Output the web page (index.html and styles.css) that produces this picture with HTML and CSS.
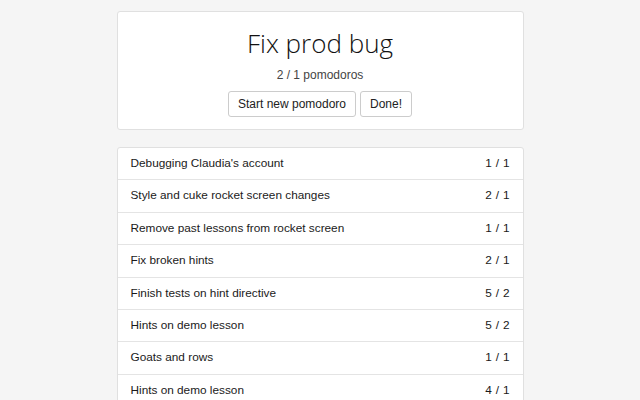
FILE: index.html
```html
<!DOCTYPE html>
<html>
<head>
<meta charset="utf-8">
<link rel="stylesheet" href="styles.css">
</head>
<body>
<div class="container">
  <div class="card">
    <h1 class="title">Fix prod bug</h1>
    <p class="count">2 / 1 pomodoros</p>
    <div class="actions">
      <button class="btn">Start new pomodoro</button>
      <button class="btn">Done!</button>
    </div>
  </div>
  <ul class="list">
    <li class="item"><span>Debugging Claudia's account</span><span class="num">1 / 1</span></li>
    <li class="item"><span>Style and cuke rocket screen changes</span><span class="num">2 / 1</span></li>
    <li class="item"><span>Remove past lessons from rocket screen</span><span class="num">1 / 1</span></li>
    <li class="item"><span>Fix broken hints</span><span class="num">2 / 1</span></li>
    <li class="item"><span>Finish tests on hint directive</span><span class="num">5 / 2</span></li>
    <li class="item"><span>Hints on demo lesson</span><span class="num">5 / 2</span></li>
    <li class="item"><span>Goats and rows</span><span class="num">1 / 1</span></li>
    <li class="item"><span>Hints on demo lesson</span><span class="num">4 / 1</span></li>
  </ul>
</div>
</body>
</html>
```
FILE: styles.css
```css
html, body {
  margin: 0;
  padding: 0;
}
body {
  background: #f5f5f5;
  font-family: "Liberation Sans", Arial, sans-serif;
  font-size: 12px;
  color: #333;
  padding-top: 11px;
  overflow: hidden;
  height: 400px;
}
.container {
  width: 407px;
  margin: 0 auto;
}
.card {
  background: #fff;
  border: 1px solid #e0e0e0;
  border-radius: 3px;
  text-align: center;
  padding: 15px 0 12px;
}
.title {
  font-family: "Open Sans", sans-serif;
  font-weight: 350;
  font-size: 26px;
  line-height: 32px;
  margin: 0;
  color: #111;
}
.count {
  margin: 9px 0 9px;
  line-height: 14px;
  color: #444;
}
.actions {
  display: flex;
  justify-content: center;
  gap: 4px;
}
.btn {
  font-family: "Liberation Sans", Arial, sans-serif;
  font-size: 12px;
  color: #222;
  background: #fff;
  border: 1px solid #ccc;
  border-radius: 3px;
  padding: 0 9px;
  height: 26px;
  line-height: 24px;
}
.list {
  list-style: none;
  margin: 17px 0 0;
  padding: 0;
  background: #fff;
  border: 1px solid #e0e0e0;
  border-radius: 3px;
}
.item {
  display: flex;
  justify-content: space-between;
  padding: 6px 13px;
  font-size: 11.8px;
  line-height: 19.4px;
  border-top: 1px solid #e4e4e4;
  color: #1a1a1a;
}
.item:first-child {
  border-top: none;
}
.num {
  word-spacing: 0.6px;
}
```
